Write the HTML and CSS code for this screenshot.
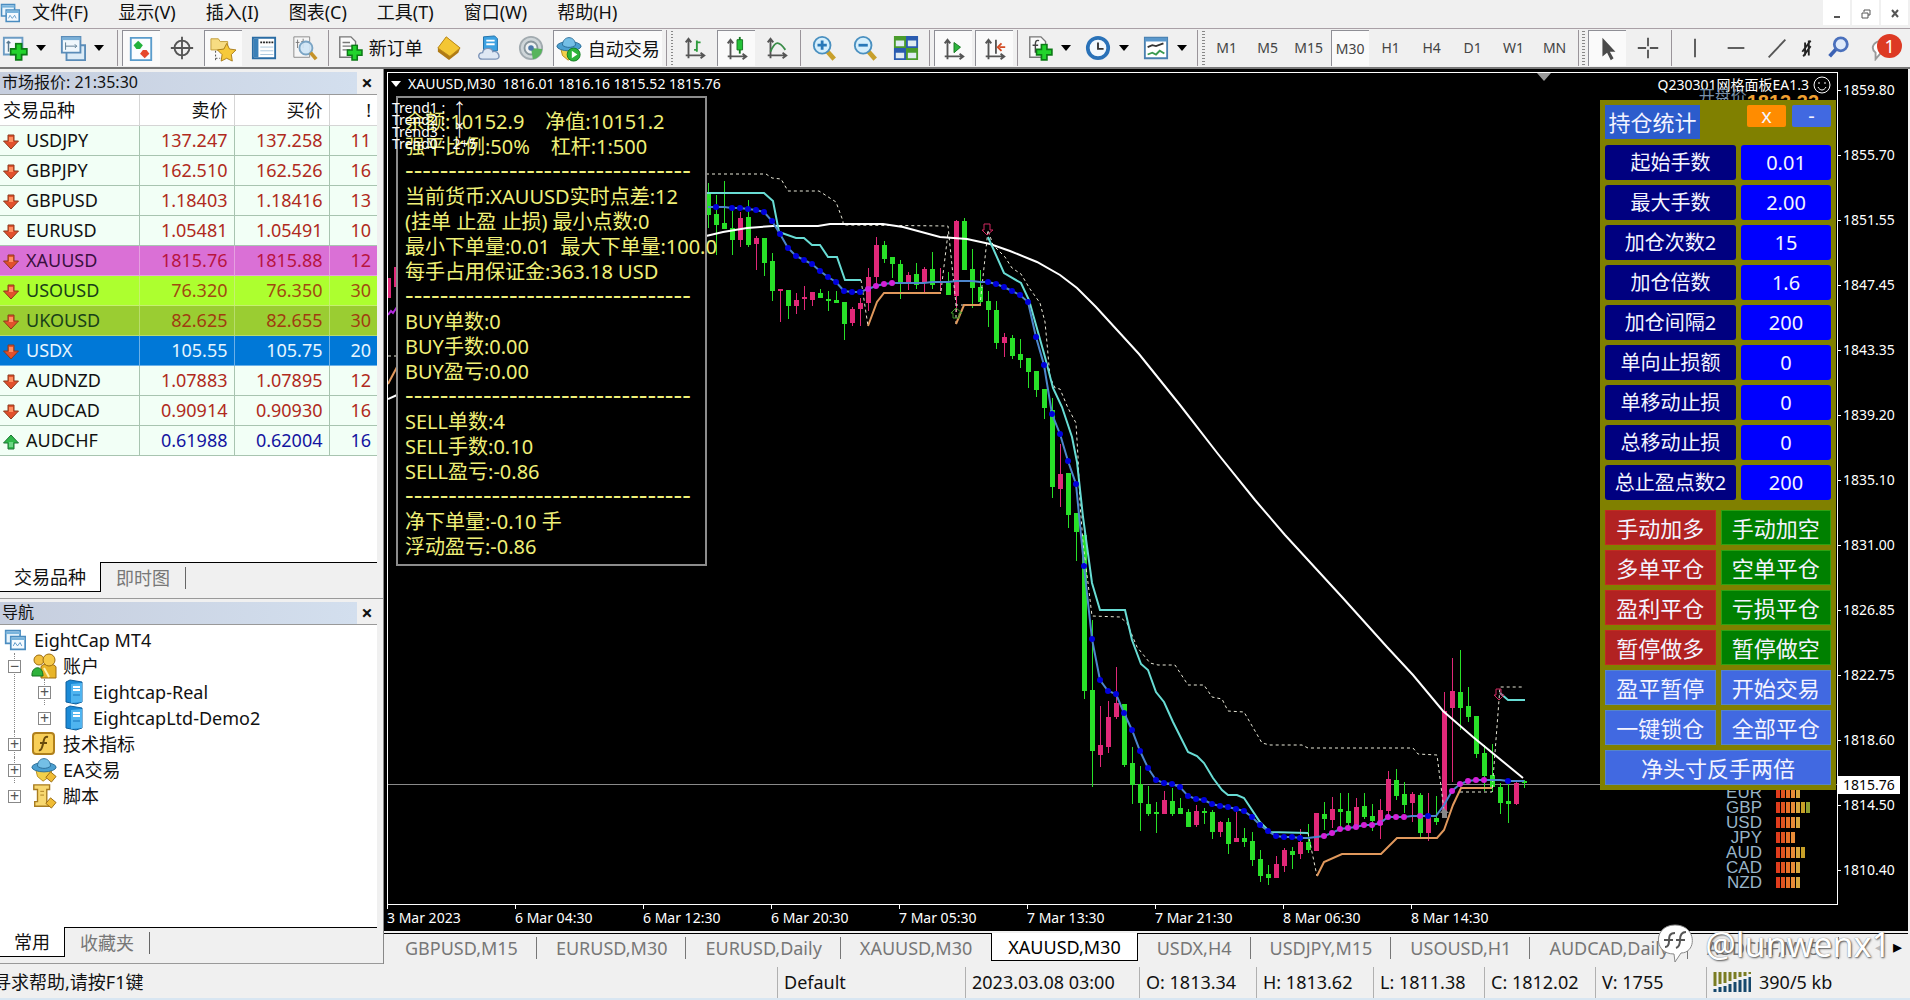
FILE: index.html
```html
<!DOCTYPE html>
<html lang="zh-CN">
<head>
  <meta charset="UTF-8">
  <meta name="viewport" content="width=device-width, initial-scale=1.0">
  <title>EightCap MT4 - XAUUSD,M30</title>
  <link rel="stylesheet" href="styles.css">
</head>
<body>

  <!-- shared icons -->
  <svg class="sprite" aria-hidden="true">
    <symbol id="i-down" viewBox="0 0 16 16"><path d="M5 1h6v6h4.500L8 15 .5 7H5z" fill="#e2502c" stroke="#8c3a1c"/><path d="M6 3h4v5H6z" fill="#ff9060"/></symbol>
    <symbol id="i-up" viewBox="0 0 16 16"><path d="M5 15h6V9h4.500L8 1 .5 9H5z" fill="#2fb84a" stroke="#1b7433"/><path d="M6 8h4v5H6z" fill="#6cd884"/></symbol>
    <symbol id="i-plus" viewBox="0 0 16 16"><path d="M5.500 1h5v4.500H15v5h-4.500V15h-5v-4.500H1v-5h4.500z" fill="#22d32c" stroke="#0c7a16" stroke-width="1.500"/></symbol>
    <symbol id="i-server" viewBox="0 0 26 26"><path d="M5 3l4-2 12 2v20l-6 2L5 23z" fill="#1b8ad6" stroke="#0f5f9c"/><path d="M10 5l11-1v19l-11 1z" fill="#4fb4f0"/><path d="M12 8h7M12 11h7" stroke="#fff" stroke-width="2"/><path d="M12 16h7" stroke="#1a77bd"/></symbol>
    <symbol id="i-hat" viewBox="0 0 28 28"><path d="M5 13h18l-3 8-7 5-6-5z" fill="#f2d04a" stroke="#b48a1c"/><ellipse cx="14" cy="11" rx="13" ry="5" fill="#4b9fd0" stroke="#2a6c96"/><path d="M7 10c0-11 14-11 14 0-4 3-10 3-14 0z" fill="#74bfe6" stroke="#2a6c96"/></symbol>
    <symbol id="i-windows" viewBox="0 0 26 26"><path d="M2 2h17v15H2z" fill="#e8f4fc" stroke="#4a8cc0" stroke-width="2"/><path d="M2 3h17v3H2z" fill="#7ab4dc"/><path d="M8 9h17v15H8z" fill="#f4faff" stroke="#4a8cc0" stroke-width="2"/><path d="M8 10h17v3H8z" fill="#7ab4dc"/><path d="M11 20l2-4 3 4 3-4 2 4" fill="none" stroke="#4a8cc0"/></symbol>
    <symbol id="i-axes" viewBox="0 0 28 28"><path d="M7 4v21M4 22h20M4 8l3-4 3 4M20 19l4 3-4 3" fill="none" stroke="#555" stroke-width="2"/></symbol>
  </svg>

  <header class="menubar">
    <svg class="app-icon"><use href="#i-windows"/></svg>
    <nav>
      <button>文件(F)</button>
      <button>显示(V)</button>
      <button>插入(I)</button>
      <button>图表(C)</button>
      <button>工具(T)</button>
      <button>窗口(W)</button>
      <button>帮助(H)</button>
    </nav>
    <div class="window-buttons">
      <button aria-label="最小化"><svg viewBox="0 0 12 12"><path d="M3 9h6" stroke="#555" stroke-width="2"/></svg></button>
      <button aria-label="还原"><svg viewBox="0 0 12 12"><path d="M4 4V2h6v5H8M2 5h6v5H2z" fill="none" stroke="#555"/></svg></button>
      <button aria-label="关闭"><svg viewBox="0 0 12 12"><path d="M3 2l6 7M9 2L3 9" stroke="#555" stroke-width="2"/></svg></button>
    </div>
  </header>

  <div class="toolbar">
    <button class="tool drop first" aria-label="新图表"><svg viewBox="0 0 28 28"><path d="M2 3h20v18H2z" fill="#f4f9fd" stroke="#6c9cc4" stroke-width="2"/><path d="M7 7v11M5 9l2-2 2 2" fill="none" stroke="#58788f" stroke-width="1.500"/><use href="#i-plus" x="8" y="8" width="20" height="20"/></svg></button>
    <button class="tool drop first" aria-label="模板配置"><svg viewBox="0 0 28 28"><path d="M7 11h20v16H7z" fill="#dcebf6" stroke="#5a8cb8" stroke-width="2"/><path d="M2 2h20v17H2z" fill="#f0f7fc" stroke="#5a8cb8" stroke-width="2"/><path d="M2 4h20" stroke="#7ab0d8" stroke-width="3"/><path d="M6 8v8M6 12h12M16 10l2 2-2 2" fill="none" stroke="#58788f"/></svg></button>
    <i class="sep"></i>
    <button class="tool on" aria-label="市场报价"><svg viewBox="0 0 28 28"><path d="M3 2h22v24H3z" fill="#fbfdff" stroke="#5a9ccc" stroke-width="2"/><path d="M11 5l5 5-3 4H9l-3-4z" fill="#23b23c"/><path d="M18 24l-5-5 3-4h4l3 4z" fill="#e6482c"/></svg></button>
    <button class="tool" aria-label="数据定位"><svg viewBox="0 0 28 28"><circle cx="14" cy="14" r="8" fill="none" stroke="#555" stroke-width="2"/><path d="M14 2v24M2 14h24" stroke="#555" stroke-width="2"/></svg></button>
    <button class="tool on" aria-label="导航"><svg viewBox="0 0 28 28"><path d="M1 3h8l2 3h8v9H1z" fill="#f7dc82" stroke="#c09a38"/><path d="M6 16v10M6 24h5" stroke="#444" stroke-dasharray="2 2"/><path d="M18 8l3 6 7 1-5 5 1 7-6-3-6 3 1-7-5-5 7-1z" fill="#f6c93a" stroke="#a87a18"/></svg></button>
    <button class="tool" aria-label="终端"><svg viewBox="0 0 28 28"><path d="M2 3h24v22H2z" fill="#fff" stroke="#2a6ca4" stroke-width="2"/><path d="M3 4h5v20H3z" fill="#3a80b8"/><path d="M10 8h14" stroke="#222" stroke-width="2" stroke-dasharray="2 1"/><path d="M10 13h14M10 17h14M10 21h14" stroke="#a8c6dc"/></svg></button>
    <button class="tool" aria-label="策略测试"><svg viewBox="0 0 28 28"><path d="M2 2h17v22H2z" fill="#f6f6f6" stroke="#888"/><path d="M6 5v9M4 8h4M12 4v10M10 7h5" stroke="#777"/><circle cx="15" cy="14" r="7" fill="#cfe6f6" fill-opacity=".9" stroke="#7aa4c4" stroke-width="2"/><path d="M20 19l6 7" stroke="#c49228" stroke-width="4"/></svg></button>
    <i class="sep"></i>
    <button class="tool wide"><svg viewBox="0 0 28 28"><path d="M3 2h12l5 5v17H3z" fill="#fafafa" stroke="#777" stroke-width="1.500"/><path d="M6 8h8M6 12h11M6 16h8" stroke="#777" stroke-width="1.500"/><use href="#i-plus" x="10" y="10" width="18" height="18"/></svg>新订单</button>
    <button class="tool" aria-label="MetaEditor"><svg viewBox="0 0 28 28"><path d="M11 2l15 12-2 5-10 8L2 18v-4z" fill="#b07a14"/><path d="M11 2l15 12-11 9L2 14z" fill="#f4c634" stroke="#b88618"/></svg></button>
    <button class="tool" aria-label="VPS"><svg viewBox="0 0 28 28"><path d="M7 2l12-1 3 3v13H7z" fill="#3da2e2" stroke="#1c6ea8"/><path d="M10 6h9M10 10h9" stroke="#fff" stroke-width="2"/><path d="M6 26c-6 0-5-7 0-7 1-6 10-6 11-1 6-2 10 8 3 8z" fill="#dfe8f4" stroke="#7c94b8" stroke-width="1.500"/></svg></button>
    <button class="tool" aria-label="信号"><svg viewBox="0 0 28 28"><circle cx="14" cy="14" r="12" fill="#cfd6d9" stroke="#a2abb0" stroke-width="2"/><circle cx="14" cy="14" r="7" fill="#eef1f2" stroke="#8a979e" stroke-width="2"/><path d="M14 14l2 12c6-1 10-6 10-11z" fill="#58b45c"/><circle cx="14" cy="14" r="3" fill="#4a78a8"/></svg></button>
    <button class="tool wide auto on"><svg viewBox="0 0 28 28"><use href="#i-hat"/><circle cx="19" cy="20" r="7" fill="#2cb43a" stroke="#147a22"/><path d="M17 16v8l6-4z" fill="#fff"/></svg>自动交易</button>
    <i class="sep"></i><i class="grip"></i>
    <button class="tool" aria-label="柱状图"><svg viewBox="0 0 28 28"><use href="#i-axes"/><path d="M16 6v12M13 16h3M16 8h4" stroke="#2c9a3c" stroke-width="2"/></svg></button>
    <button class="tool on" aria-label="阴阳烛"><svg viewBox="0 0 28 28"><use href="#i-axes"/><path d="M17 1v18" stroke="#14761f" stroke-width="2"/><path d="M14 4h6v11h-6z" fill="#24c238" stroke="#14761f"/></svg></button>
    <button class="tool" aria-label="折线图"><svg viewBox="0 0 28 28"><use href="#i-axes"/><path d="M7 18c5-12 9-12 16-2" fill="none" stroke="#3a8c48" stroke-width="2"/></svg></button>
    <i class="sep"></i>
    <button class="tool" aria-label="放大"><svg viewBox="0 0 28 28"><path d="M17 17l8 9" stroke="#c8a02c" stroke-width="5"/><circle cx="12" cy="11" r="9" fill="#d6effc" stroke="#4a90c0" stroke-width="2"/><path d="M12 6v10M7 11h10" stroke="#2878b8" stroke-width="3"/></svg></button>
    <button class="tool" aria-label="缩小"><svg viewBox="0 0 28 28"><path d="M17 17l8 9" stroke="#c8a02c" stroke-width="5"/><circle cx="12" cy="11" r="9" fill="#d6effc" stroke="#4a90c0" stroke-width="2"/><path d="M7 11h10" stroke="#2878b8" stroke-width="3"/></svg></button>
    <button class="tool" aria-label="平铺窗口"><svg viewBox="0 0 28 28"><path d="M1 1h13v13H1zM14 14h13v13H14z" fill="#4a9c2c"/><path d="M14 1h13v13H14zM1 14h13v13H1z" fill="#2a5cb0"/><path d="M3 6h9v6H3zM16 6h9v6h-9zM3 19h9v6H3zM16 19h9v6h-9z" fill="#e0ecf2"/></svg></button>
    <i class="sep"></i>
    <button class="tool on" aria-label="自动滚动"><svg viewBox="0 0 28 28"><use href="#i-axes"/><path d="M14 7l7 5-7 6z" fill="#2cb43c" stroke="#177522"/></svg></button>
    <button class="tool on" aria-label="图表平移"><svg viewBox="0 0 28 28"><use href="#i-axes"/><path d="M15 4v15" stroke="#555" stroke-width="2"/><path d="M25 12h-6M21 8l-4 4 4 4" fill="none" stroke="#d44c24" stroke-width="2"/></svg></button>
    <i class="sep"></i>
    <button class="tool drop" aria-label="技术指标"><svg viewBox="0 0 28 28"><path d="M3 2h12l5 5v17H3z" fill="#fafafa" stroke="#777" stroke-width="1.500"/><path d="M13 6c-3-1-4 1-4 4v9M6 11h6" fill="none" stroke="#444" stroke-width="1.500"/><use href="#i-plus" x="9" y="9" width="19" height="19"/></svg></button>
    <button class="tool drop" aria-label="时段"><svg viewBox="0 0 28 28"><circle cx="14" cy="14" r="11" fill="#f2f8fc" stroke="#2a72b8" stroke-width="4"/><path d="M14 8v7h6" fill="none" stroke="#333" stroke-width="2"/></svg></button>
    <button class="tool drop" aria-label="模板"><svg viewBox="0 0 28 28"><path d="M2 3h24v22H2z" fill="#fff" stroke="#4a80b0" stroke-width="2"/><path d="M2 5h24" stroke="#5a98cc" stroke-width="4"/><path d="M5 13l5-2 4 1 8-3" fill="none" stroke="#333" stroke-width="2"/><path d="M5 21l5-2 4 2 4-4 5 3" fill="none" stroke="#3a9a50" stroke-width="2"/></svg></button>
    <i class="sep"></i><i class="grip"></i>
    <button class="tool period">M1</button>
    <button class="tool period">M5</button>
    <button class="tool period">M15</button>
    <button class="tool period on">M30</button>
    <button class="tool period">H1</button>
    <button class="tool period">H4</button>
    <button class="tool period">D1</button>
    <button class="tool period">W1</button>
    <button class="tool period">MN</button>
    <i class="sep"></i><i class="grip"></i>
    <button class="tool on" aria-label="光标"><svg viewBox="0 0 28 28"><path d="M8 2v20l5-4 4 8 3-2-4-7h6z" fill="#4a4a4a"/></svg></button>
    <button class="tool" aria-label="十字线"><svg viewBox="0 0 28 28"><path d="M14 3v9M14 16v9M3 14h9M16 14h9" stroke="#555" stroke-width="2"/></svg></button>
    <i class="sep"></i>
    <button class="tool" aria-label="垂直线"><svg viewBox="0 0 28 28"><path d="M14 4v20" stroke="#555" stroke-width="2"/></svg></button>
    <button class="tool" aria-label="水平线"><svg viewBox="0 0 28 28"><path d="M5 14h18" stroke="#555" stroke-width="2"/></svg></button>
    <button class="tool" aria-label="趋势线"><svg viewBox="0 0 28 28"><path d="M5 24L23 5" stroke="#555" stroke-width="2"/></svg></button>
    <button class="tool cut" aria-label="等距通道"><svg viewBox="0 0 12 28"><path d="M2 18L11 6M3 23l8-11M5 8v14M9 6v16" stroke="#222" stroke-width="2"/></svg></button>
    <span class="spacer"></span>
    <button class="tool" aria-label="搜索"><svg viewBox="0 0 28 28"><path d="M13 14l-8 9" stroke="#3c62b4" stroke-width="4"/><circle cx="17" cy="10" r="7" fill="#dfeafa" stroke="#4a70bc" stroke-width="3"/></svg></button>
    <button class="tool chat" aria-label="消息"><svg viewBox="0 0 28 28"><path d="M6 24v-5c-7-6 0-14 8-12 10 2 9 13-3 13l-5 6z" fill="#fff" stroke="#999" stroke-width="2"/></svg><b>1</b></button>
  </div>

  <main>
    <aside>
      <section class="panel market">
        <h2><span>市场报价: 21:35:30</span><button aria-label="关闭">×</button></h2>
        <div class="panel-body">
          <table>
            <thead><tr><th>交易品种</th><th>卖价</th><th>买价</th><th>!</th></tr></thead>
            <tbody>
              <tr><td><svg><use href="#i-down"/></svg>USDJPY</td><td>137.247</td><td>137.258</td><td>11</td></tr>
              <tr><td><svg><use href="#i-down"/></svg>GBPJPY</td><td>162.510</td><td>162.526</td><td>16</td></tr>
              <tr><td><svg><use href="#i-down"/></svg>GBPUSD</td><td>1.18403</td><td>1.18416</td><td>13</td></tr>
              <tr><td><svg><use href="#i-down"/></svg>EURUSD</td><td>1.05481</td><td>1.05491</td><td>10</td></tr>
              <tr class="orchid"><td><svg><use href="#i-down"/></svg>XAUUSD</td><td>1815.76</td><td>1815.88</td><td>12</td></tr>
              <tr class="lime"><td><svg><use href="#i-down"/></svg>USOUSD</td><td>76.320</td><td>76.350</td><td>30</td></tr>
              <tr class="olive"><td><svg><use href="#i-down"/></svg>UKOUSD</td><td>82.625</td><td>82.655</td><td>30</td></tr>
              <tr class="selected"><td><svg><use href="#i-down"/></svg>USDX</td><td>105.55</td><td>105.75</td><td>20</td></tr>
              <tr><td><svg><use href="#i-down"/></svg>AUDNZD</td><td>1.07883</td><td>1.07895</td><td>12</td></tr>
              <tr><td><svg><use href="#i-down"/></svg>AUDCAD</td><td>0.90914</td><td>0.90930</td><td>16</td></tr>
              <tr class="rise"><td><svg><use href="#i-up"/></svg>AUDCHF</td><td>0.61988</td><td>0.62004</td><td>16</td></tr>
            </tbody>
          </table>
        </div>
        <div class="tabs"><button class="active">交易品种</button><button>即时图</button><i></i></div>
      </section>

      <section class="panel navigator">
        <h2><span>导航</span><button aria-label="关闭">×</button></h2>
        <div class="panel-body">
          <div class="node root"><svg><use href="#i-windows"/></svg>EightCap MT4</div>
          <ul class="tree">
            <li>
              <div class="node"><button aria-label="折叠">−</button><svg viewBox="0 0 26 26"><path d="M10 25V14c0-4 14-4 15 0v11z" fill="#e8b428" stroke="#9c6c10"/><circle cx="8" cy="7" r="5" fill="#f2c040" stroke="#9c6c10"/><circle cx="18" cy="7" r="6" fill="#f6ca48" stroke="#9c6c10"/><path d="M1 23c-1-10 11-12 11 0z" fill="#2fb23c" stroke="#15701f"/><path d="M13 15l5 9" stroke="#fff2b0" stroke-width="2"/></svg>账户</div>
              <ul>
                <li><div class="node"><button aria-label="展开">+</button><svg><use href="#i-server"/></svg>Eightcap-Real</div></li>
                <li><div class="node"><button aria-label="展开">+</button><svg><use href="#i-server"/></svg>EightcapLtd-Demo2</div></li>
              </ul>
            </li>
            <li><div class="node"><button aria-label="展开">+</button><svg viewBox="0 0 26 26"><rect x="2" y="2" width="21" height="21" rx="3" fill="#f8cf58" stroke="#b0801c" stroke-width="2"/><path d="M17 6c-4-1-4 3-5 7s-2 7-4 6M9 12h7" fill="none" stroke="#6a4c0c" stroke-width="2"/></svg>技术指标</div></li>
            <li><div class="node"><button aria-label="展开">+</button><svg viewBox="0 0 28 28"><use href="#i-hat"/><path d="M21 16l6 5-5 6-6-5z" fill="#f0bc34" stroke="#96690f"/></svg>EA交易</div></li>
            <li><div class="node"><button aria-label="展开">+</button><svg viewBox="0 0 28 28"><path d="M3 2h17v5h-3v14h4v4H4v-5h3V7H3z" fill="#f8d870" stroke="#a87c20" stroke-width="1.500"/><path d="M10 9h4M10 13h4" stroke="#a87c20"/><path d="M21 16l6 5-5 6-6-5z" fill="#f0bc34" stroke="#96690f"/></svg>脚本</div></li>
          </ul>
        </div>
        <div class="tabs"><button class="active">常用</button><button>收藏夹</button><i></i></div>
      </section>
    </aside>

    <div class="workspace">
      <div class="chart">
        <div class="plot">
          <svg id="candles" viewBox="388 73 1449 831" preserveAspectRatio="xMinYMin meet" role="img" aria-label="XAUUSD M30 K线图"></svg>
          <p class="chart-title"><i></i>XAUUSD,M30&nbsp; 1816.01 1816.16 1815.52 1815.76</p>

          <div class="account">
            <p>余额:10152.9    净值:10151.2</p>
            <p>强平比例:50%    杠杆:1:500</p>
            <p class="rule">---------------------------------</p>
            <p>当前货币:XAUUSD实时点差:12</p>
            <p>(挂单 止盈 止损) 最小点数:0</p>
            <p>最小下单量:0.01  最大下单量:100.0</p>
            <p>每手占用保证金:363.18 USD</p>
            <p class="rule">---------------------------------</p>
            <p>BUY单数:0</p>
            <p>BUY手数:0.00</p>
            <p>BUY盈亏:0.00</p>
            <p class="rule">---------------------------------</p>
            <p>SELL单数:4</p>
            <p>SELL手数:0.10</p>
            <p>SELL盈亏:-0.86</p>
            <p class="rule">---------------------------------</p>
            <p>净下单量:-0.10 手</p>
            <p>浮动盈亏:-0.86</p>
          </div>
          <ul class="trends">
            <li>Trend1 :  ↑</li>
            <li>Trend2 :  ↓</li>
            <li>Trend3 :  ↑</li>
            <li>Trend0 :  2+5</li>
          </ul>

          <div class="ea-name">Q230301网格面板EA1.3
            <svg viewBox="0 0 18 18"><circle cx="9" cy="9" r="8" fill="none" stroke="#fff"/><path d="M6 6v2M12 6v2M5 11c2 4 6 4 8 0" fill="none" stroke="#fff"/></svg>
          </div>
          <div class="open-price"><span>开盘价</span><b>1813.33</b></div>

          <form class="ea-panel">
            <div class="ea-head">
              <button type="button" class="caption">持仓统计</button>
              <button type="button" class="mini close">x</button>
              <button type="button" class="mini">-</button>
            </div>
            <div class="ea-fields">
              <label for="f1">起始手数</label><input id="f1" value="0.01">
              <label for="f2">最大手数</label><input id="f2" value="2.00">
              <label for="f3">加仓次数2</label><input id="f3" value="15">
              <label for="f4">加仓倍数</label><input id="f4" value="1.6">
              <label for="f5">加仓间隔2</label><input id="f5" value="200">
              <label for="f6">单向止损额</label><input id="f6" value="0">
              <label for="f7">单移动止损</label><input id="f7" value="0">
              <label for="f8">总移动止损</label><input id="f8" value="0">
              <label for="f9">总止盈点数2</label><input id="f9" value="200">
            </div>
            <div class="ea-actions">
              <button type="button" class="red">手动加多</button><button type="button" class="green">手动加空</button>
              <button type="button" class="red">多单平仓</button><button type="button" class="green">空单平仓</button>
              <button type="button" class="red">盈利平仓</button><button type="button" class="green">亏损平仓</button>
              <button type="button" class="red">暂停做多</button><button type="button" class="green">暂停做空</button>
              <button type="button">盈平暂停</button><button type="button">开始交易</button>
              <button type="button">一键锁仓</button><button type="button">全部平仓</button>
              <button type="button" class="full">净头寸反手两倍</button>
            </div>
          </form>

          <ul class="strength">
            <li>EUR<span><i></i><i></i><i></i><i></i><i></i></span></li>
            <li>GBP<span><i></i><i></i><i></i><i></i><i></i><i></i><i></i></span></li>
            <li>USD<span><i></i><i></i><i></i><i></i><i></i></span></li>
            <li>JPY<span><i></i><i></i><i></i><i></i></span></li>
            <li>AUD<span><i></i><i></i><i></i><i></i><i></i><i></i></span></li>
            <li>CAD<span><i></i><i></i><i></i><i></i><i></i></span></li>
            <li>NZD<span><i></i><i></i><i></i><i></i><i></i></span></li>
          </ul>
        </div>
        <div class="price-axis">
          <ul>
            <li>1859.80</li><li>1855.70</li><li>1851.55</li><li>1847.45</li><li>1843.35</li><li>1839.20</li><li>1835.10</li>
            <li>1831.00</li><li>1826.85</li><li>1822.75</li><li>1818.60</li><li>1814.50</li><li>1810.40</li>
          </ul>
          <span class="last-price">1815.76</span>
        </div>
        <ul class="time-axis">
          <li>3 Mar 2023</li><li>6 Mar 04:30</li><li>6 Mar 12:30</li><li>6 Mar 20:30</li><li>7 Mar 05:30</li>
          <li>7 Mar 13:30</li><li>7 Mar 21:30</li><li>8 Mar 06:30</li><li>8 Mar 14:30</li>
        </ul>
      </div>
      <div class="chart-tabs">
        <button>GBPUSD,M15</button><button>EURUSD,M30</button><button>EURUSD,Daily</button><button class="before">XAUUSD,M30</button><button class="active">XAUUSD,M30</button><button>USDX,H4</button><button>USDJPY,M15</button><button>USOUSD,H1</button><button>AUDCAD,Daily</button><button>AUDCHF,M15</button>
        <span class="scroll">◂</span><span class="scroll dark">▸</span>
      </div>
    </div>
  </main>

  <footer class="statusbar">
    <span class="help">寻求帮助,请按F1键</span>
    <span class="s-profile">Default</span>
    <span class="s-time">2023.03.08 03:00</span>
    <span class="s-price">O: 1813.34</span>
    <span class="s-price">H: 1813.62</span>
    <span class="s-low">L: 1811.38</span>
    <span class="s-low">C: 1812.02</span>
    <span class="s-low">V: 1755</span>
    <span class="s-net"><svg viewBox="0 0 38 20"><path d="M2 0v14M7 0v12M12 0v11M17 0v9M22 0v7M27 0v5M32 0v4M37 0v2" stroke="#7a7c22" stroke-width="3"/><path d="M2 17v3M7 15v5M12 14v6M17 12v8M22 10v10M27 8v12M32 7v13M37 5v15" stroke="#16486c" stroke-width="3"/></svg>390/5 kb</span>
  </footer>

  <div class="watermark">
    <svg viewBox="0 0 36 40"><path d="M18 1c22 0 22 28 6 28l-6 9-1-8C-4 30-4 1 18 1z" fill="#fff" stroke="#888"/><path d="M18 9c-6 0-6 4-6 8s-2 6-4 6M7 16h9M29 8c-5 0-6 4-6 8s-1 7-4 8M19 16h9" fill="none" stroke="#555" stroke-width="2"/></svg>
    <span>@lunwenx1</span>
  </div>

<script>
// one row per bar: colour, high, body top, body bottom, low
const bars = `g183,192,215,228 g195,214,225,255 g181,223,229,229 g207,228,240,255 p212,218,240,247 g200,217,245,247
p236,238,244,270 g238,238,263,276 g253,261,291,301 p289,289,291,322 g290,290,306,319 p293,300,306,314
p286,297,299,310 p292,292,300,306 g289,293,298,298 g291,299,301,311 g291,300,303,303 g302,302,324,340
p307,309,323,326 p298,303,309,326 p268,277,303,311 p237,245,277,286 g241,245,259,263 g257,257,264,278
g260,264,282,299 p272,275,283,290 g263,274,285,289 p267,269,283,293 g252,269,285,289 p268,281,283,291
g272,283,295,295 p220,221,296,312 g218,221,270,270 g249,269,288,308 g270,287,302,303 g291,301,310,327
g301,310,343,349 p333,337,343,357 g335,338,356,359 g339,354,360,368 g358,358,372,388 g371,371,390,397
g389,389,408,419 g398,410,487,498 p444,474,489,507 g473,473,515,528 g513,513,532,561 g533,535,691,699
g620,690,751,787 p706,745,755,767 p701,717,747,753 p667,703,717,719 g704,704,765,767 g747,763,785,804
g766,784,803,831 g786,804,814,816 g802,812,814,833 p791,800,814,814 g788,801,814,816 g798,808,814,814
g809,812,827,827 p805,811,825,827 g808,811,813,824 g810,812,832,839 p821,822,832,837 g818,822,844,854
p812,838,842,842 g828,838,842,847 g832,841,860,866 g850,859,876,882 g865,874,878,885 p856,864,878,878
p848,850,866,872 g847,851,855,869 p829,842,854,859 g824,842,850,853 p813,813,851,851 g802,814,819,830
p797,809,820,828 g793,809,812,830 g793,811,823,830 p798,807,825,825 g793,806,817,819 g804,816,821,831
p799,810,825,839 p771,779,811,815 g769,780,796,800 g782,794,805,813 p792,794,803,822 g793,795,833,838
p793,816,833,841 g796,818,822,825 p692,711,817,818 p658,691,708,782 g650,692,708,730 g687,706,717,722
g716,716,754,758 g745,753,776,791 g744,775,787,792 g783,787,803,814 g784,801,804,823 p780,783,804,805
g780,781,783,788`.split(/\s+/);

// average line value at each bar
const average = [207,207,207,208,208,209,210,212,221,234,248,256,260,264,271,277,282,291,292,292,289,286,284,283,
  283,283,283,283,282,282,282,281,281,281,282,282,284,287,291,295,302,337,365,414,434,461,484,566,639,680,691,694,
  713,730,751,768,780,783,784,787,796,799,800,804,806,807,809,811,817,825,831,836,837,837,838,838,837,836,833,829,
  828,827,825,825,823,817,817,817,816,816,816,816,805,791,784,781,780,780,780,780,781,781,781];
// dot at each bar: b = falling, m = rising, - = none
const dots = '-b-bbbbbbbbbbbbbbbbbmmmm-----------bbbbbbbbbbbbbbbbbbbbbbbbbbbbbbbbbbbbbbbb--mmmmmmmmmmm-mb--mmmmm--b--b';

const chart = document.getElementById('candles');
let out = '';
const barX = (i) => 708 + i * 8;

function line(cls, points) {
  out += `<polyline class="${cls}" points="${points}"/>`;
}

// part of the bars left of the account box
out += '<path class="p" d="M388 278h3v20h-3zM394 267h5v20h-5z"/>';
line('violet', '388,315 391,311 393,313 397,307');
line('dash', '388,356 397,356');
line('orange', '388,384 397,367');
line('white', '388,399 397,395');

out += '<path class="last" d="M388 784.5H1837"/>';
bars.forEach((bar, i) => {
  const [high, top, bottom, low] = bar.slice(1).split(',').map(Number);
  const x = barX(i);
  out += `<path class="${bar[0]}" d="M${x} ${high}h1V${low}h-1zM${x - 2} ${top}h5V${bottom}h-5z"/>`;
});

line('dash', '706,174 766,174 772,178 781,179 788,191 819,191 836,202 843,221 843,225 948,226 956,305');
line('dash', '941,291 948,233');
line('dash', '861,280 868,326');
line('dash', '956,324 956,305 980,305 988,230 993,245 1005,257 1012,268 1021,274 1030,289 1040,303 1045,322 1047,343 1050,377 1055,388 1060,389 1068,408 1076,423 1078,457 1080,503 1083,543 1088,583 1092,616 1120,617 1127,623 1137,647 1150,663 1158,665 1175,665 1188,685 1204,685 1212,697 1222,699 1228,711 1244,712 1262,743 1270,745 1302,745 1308,748 1413,748 1418,754 1437,755 1444,810');
line('dash', '1308,833 1317,876');
line('dash', '1460,792 1492,792 1500,687 1523,687');
line('white', '706,236 723,232 747,228 773,226 818,226 830,224 883,224 903,227 940,237 967,239 990,244 1010,251 1037,262 1060,275 1077,288 1096,307 1139,354 1180,405 1218,454 1255,500 1285,535 1342,597 1387,647 1413,675 1443,711 1473,737 1523,778');
line('cyan', '706,193 764,193 773,201 779,232 796,238 804,238 812,245 820,245 828,257 837,257 845,280 861,280');
line('cyan', '988,237 1004,273 1021,283 1029,300 1045,357 1053,388 1062,407 1072,437 1077,462 1083,517 1092,583 1100,610 1125,610 1132,640 1141,664 1148,670 1156,692 1164,702 1173,722 1188,752 1197,756 1204,763 1213,778 1222,790 1228,795 1237,795 1244,798 1260,822 1270,832 1308,833');
line('cyan', '1500,693 1508,700 1525,700');
line('orange', '868,326 877,302 884,293 941,293');
line('orange', '956,324 964,305 981,305');
line('orange', '1317,876 1324,862 1342,854 1381,854 1397,838 1437,838 1444,830 1453,805 1461,788 1492,788');
line('steel', average.map((y, i) => `${barX(i)},${y}`).join(' '));
average.forEach((y, i) => {
  if (dots[i] !== '-') out += `<circle class="dot-${dots[i]}" cx="${barX(i)}" cy="${y}" r="3"/>`;
});

// entry arrows and the shift marker
out += '<path class="mark-p" d="M984 224h6v6h3l-6 5-5-5h2zM1496 689h5v6h3l-5 5-5-5h2z"/>';
out += '<path class="mark-g" d="M953 318h6v-5h3l-6-5-5 5h2z"/><path class="mark-grey" d="M1442 818h5v-5h2l-5-5-4 5h2z"/>';
out += '<path fill="#999" d="M1537 73h14l-7 8z"/>';
chart.innerHTML = out;
</script>
</body>
</html>
```
FILE: styles.css
```css
* {
  box-sizing: border-box;
}

body {
  margin: 0;
  height: 100vh;
  display: flex;
  flex-direction: column;
  overflow: hidden;
  background: #f0f0f0;
  color: #111;
  font-family: "Noto Sans", "Noto Sans CJK SC", sans-serif;
  font-size: 18px;
  line-height: 24px;
}

button,
input {
  font: inherit;
  color: inherit;
  border: 0;
  padding: 0;
  background: none;
}

ul {
  list-style: none;
  margin: 0;
  padding: 0;
}

p {
  margin: 0;
}

.sprite {
  display: none;
}

/* menu */
.menubar {
  display: flex;
  align-items: flex-start;
  height: 28px;
  flex: none;
}

.app-icon {
  width: 20px;
  height: 26px;
}

.menubar nav {
  display: flex;
  gap: 30px;
  flex: 1;
  padding-left: 12px;
}

.window-buttons {
  display: flex;
  gap: 2px;
  margin-right: 2px;
}

.window-buttons button {
  width: 27px;
  height: 25px;
  background: #fff;
}

.window-buttons svg {
  width: 12px;
  height: 12px;
}

/* toolbar */
.toolbar {
  display: flex;
  align-items: center;
  gap: 3px;
  height: 41px;
  flex: none;
  border-top: 1px solid #a9a0a6;
  border-bottom: 2px solid #777;
}

.tool {
  display: flex;
  align-items: center;
  justify-content: center;
  flex: none;
  width: 38px;
  height: 36px;
}

.tool svg {
  width: 26px;
  height: 26px;
  flex: none;
}

.tool.on {
  background: #fafafa;
  border-top: 1px solid #8f8f96;
  border-left: 1px solid #8f8f96;
}

.tool.wide {
  width: auto;
  gap: 6px;
  padding: 0 4px;
}

.tool.auto {
  padding: 0 2px;
}

.tool.drop {
  width: 55px;
  justify-content: flex-start;
  gap: 8px;
  padding-left: 5px;
}

.tool.drop.first {
  padding-left: 2px;
}

.tool.drop::after {
  content: "";
  border: 5px solid transparent;
  border-top: 6px solid #000;
  border-bottom: 0;
}

.tool.period {
  color: #444;
  font-size: 14px;
}

.tool.cut {
  width: 14px;
}

.tool.cut svg {
  width: 12px;
}

.tool.chat {
  position: relative;
}

.tool.chat b {
  position: absolute;
  top: 4px;
  left: 13px;
  width: 25px;
  border-radius: 50%;
  background: #dd3a24;
  color: #fff;
  font-weight: normal;
}

.spacer {
  flex: 1;
}

.toolbar .spacer + .tool + .tool {
  margin: 0 8px 0 4px;
}

.sep {
  width: 1px;
  height: 36px;
  margin: 0 1px;
  background: #9a949a;
}

.grip {
  width: 3px;
  height: 34px;
  background: repeating-linear-gradient(#888 0 1px, #f0f0f0 1px 3px);
}

main {
  display: flex;
  flex: 1;
  min-height: 0;
}

/* left side */
aside {
  display: grid;
  grid-template-rows: 530fr 365fr;
  width: 384px;
  flex: none;
  border-right: 1px solid #888;
}

.panel {
  display: flex;
  flex-direction: column;
  min-height: 0;
  padding-right: 6px;
  border-bottom: 1px solid #999;
}

.panel h2 {
  display: flex;
  align-items: center;
  height: 26px;
  margin: 0;
  padding-top: 2px;
  border-bottom: 1px solid #999;
  font-size: 16px;
  font-weight: normal;
}

.panel h2 span {
  flex: 1;
  height: 22px;
  padding-left: 2px;
  line-height: 20px;
  background: linear-gradient(90deg, #c6cede, #d3dfee);
}

.panel h2 button {
  width: 20px;
  line-height: 20px;
  font-size: 20px;
  font-weight: bold;
}

.panel-body {
  flex: 1;
  min-height: 0;
  background: #fff;
}

table {
  width: 100%;
  table-layout: fixed;
  border-collapse: collapse;
}

th,
td {
  height: 30px;
  padding: 0 6px 0 0;
  border-right: 1px solid #a8c4b0;
  border-bottom: 1px solid #a8c4b0;
  text-align: right;
  font-weight: normal;
}

th {
  border-color: #d5d5d5;
}

th:first-child,
td:first-child {
  width: 139px;
  padding-left: 3px;
  text-align: left;
}

th:nth-child(2),
th:nth-child(3) {
  width: 95px;
}

th:last-child,
td:last-child {
  border-right: 0;
}

td {
  color: #b02a20;
  background: #f2fff6;
}

td:first-child {
  color: #111;
}

td svg {
  width: 16px;
  height: 16px;
  margin-right: 7px;
  vertical-align: -3px;
}

.orchid td { background: #da70d6; color: #b81440; border-color: #e6a0e0; }
.lime td { background: #adff2f; color: #a04a10; border-color: #c6f070; }
.olive td { background: #9acd32; color: #a03c10; border-color: #b8dc6c; }
.orchid td:first-child { color: #3a1040; }
.lime td:first-child,
.olive td:first-child { color: #184018; }
.selected td,
.selected td:first-child { background: #0078d7; color: #e6f6ff; border-color: #6ab0e8; }
.rise td { color: #1414a0; }
.rise td:first-child { color: #111; }

.tabs {
  display: flex;
  align-items: flex-start;
  flex: none;
  height: 36px;
}

.tabs button {
  height: 30px;
  padding: 0 15px;
  border-top: 1px solid #000;
  color: #777;
}

.tabs button.active {
  background: #fff;
  color: #111;
  padding: 0 14px;
  border-top: 0;
  border-right: 1px solid #000;
  border-bottom: 1px solid #000;
}

.tabs i {
  flex: 1;
  height: 27px;
  border-top: 1px solid #000;
  background: linear-gradient(#666, #666) 0 4px / 1px 22px no-repeat;
}

.node {
  display: flex;
  align-items: center;
  height: 26px;
  white-space: nowrap;
}

.node svg {
  width: 26px;
  height: 26px;
  margin-right: 6px;
}

.node.root {
  padding: 2px 0 0 4px;
  height: 28px;
}

.node.root svg {
  width: 22px;
  height: 22px;
  margin-right: 8px;
}

.tree li {
  margin-left: 14px;
  border-left: 1px dotted #888;
}

.tree li:last-child {
  border-color: transparent;
}

.tree li li {
  margin-left: 29px;
}

.tree .node {
  margin-left: -7px;
}

.node button {
  width: 13px;
  height: 13px;
  border: 1px solid #888;
  background: #fff;
  color: #555;
  font-size: 16px;
  line-height: 11px;
}

.tree .node button + svg {
  margin-left: 10px;
}

/* chart window */
.workspace {
  display: flex;
  flex-direction: column;
  flex: 1;
  min-width: 0;
  margin-right: 2px;
}

.chart {
  display: grid;
  grid-template-columns: minmax(0, 1fr) 70px;
  grid-template-rows: minmax(0, 1fr) 26px;
  flex: 1;
  min-height: 0;
  padding: 3px 0 0 3px;
  background: #000;
  color: #fff;
  font-size: 14px;
  line-height: 18px;
}

.plot {
  position: relative;
  border: 1px solid #fff;
}

#candles {
  display: block;
  width: 100%;
  height: 100%;
}

#candles polyline {
  fill: none;
}

.g { fill: #28e028; }
.p { fill: #e02878; }
.last { stroke: #8a8a8a; }
.white { stroke: #fff; stroke-width: 2; }
.cyan { stroke: #68dcd4; stroke-width: 2; }
.orange { stroke: #e0985c; stroke-width: 2; }
.violet { stroke: #b428e0; stroke-width: 2; }
.steel { stroke: #4c86cc; stroke-width: 2; }
.dash { stroke: #e8e8d8; stroke-dasharray: 3 3; }
.dot-b { fill: #0000dc; }
.dot-m { fill: #d420d8; }
.mark-p { fill: none; stroke: #d02860; }
.mark-g { fill: none; stroke: #3c9a28; }
.mark-grey { fill: #888; }

/* items laid over the candles */
.chart-title,
.account,
.trends,
.ea-name,
.open-price,
.ea-panel,
.strength {
  position: absolute;
}

.chart-title {
  top: 2px;
  left: 3px;
  display: flex;
  align-items: center;
  gap: 7px;
  white-space: nowrap;
}

.chart-title i {
  border: 5px solid transparent;
  border-top: 6px solid #fff;
  border-bottom: 0;
}

.account {
  top: 23px;
  left: 8px;
  width: 311px;
  height: 470px;
  padding: 11px 0 0 7px;
  border: 2px solid #8c8c8c;
  background: #000;
  color: #f0f078;
  font-size: 20px;
  line-height: 25px;
}

.account p {
  height: 25px;
  white-space: pre;
}

.account .rule {
  font-family: "DejaVu Sans", sans-serif;
  font-size: 24px;
}

.trends {
  top: 29px;
  left: 4px;
  line-height: 12px;
}

.trends li {
  height: 12px;
  white-space: pre;
}

.ea-name {
  top: 3px;
  right: 6px;
  display: flex;
  gap: 4px;
  align-items: center;
}

.ea-name svg {
  width: 18px;
  height: 18px;
}

.open-price {
  top: 14px;
  right: 18px;
  display: flex;
  color: #7890a8;
  font-size: 16px;
}

.open-price b {
  color: #f0a030;
  font-family: "Liberation Sans", sans-serif;
  font-size: 20px;
  line-height: 30px;
}

.ea-panel {
  top: 27px;
  right: 1px;
  z-index: 1;
  width: 236px;
  padding: 5px;
  background: #808000;
  color: #f4f4ff;
  font-size: 20px;
  text-align: center;
}

.ea-head {
  display: flex;
  align-items: flex-start;
  gap: 6px;
  height: 40px;
}

.ea-head .caption {
  width: 95px;
  height: 34px;
  margin-right: auto;
  background: #2c5ccc;
  font-size: 22px;
  line-height: 34px;
}

.mini {
  width: 39px;
  height: 22px;
  border-radius: 2px;
  background: #4169e1;
}

.mini.close {
  background: #ff8c00;
}

.ea-fields {
  display: grid;
  grid-template-columns: 131fr 90fr;
  grid-auto-rows: 35px;
  gap: 5px;
}

.ea-fields label,
.ea-fields input {
  min-width: 0;
  width: 100%;
  border-radius: 3px;
  background: #000080;
  line-height: 35px;
  text-align: center;
}

.ea-fields input {
  background: #0000ff;
}

.ea-actions {
  display: grid;
  grid-template-columns: 1fr 1fr;
  grid-auto-rows: 35px;
  gap: 5px;
  margin-top: 10px;
  font-size: 22px;
}

.ea-actions button {
  border: 1px solid #5684c8;
  background: #4169e1;
}

.ea-actions .red { background: #b22222; border-color: #c02c20; }
.ea-actions .green { background: #008000; border-color: #30a010; }

.ea-actions .full {
  grid-column: 1 / 3;
}

.strength {
  right: 25px;
  bottom: 14px;
  color: #98b4c8;
  font-family: "Liberation Sans", sans-serif;
  font-size: 17px;
  line-height: 15px;
}

.strength li {
  display: flex;
  justify-content: flex-end;
  gap: 14px;
  align-items: center;
}

.strength span {
  display: flex;
  gap: 1px;
  width: 36px;
}

.strength i {
  width: 4px;
  height: 11px;
  background: #e03c1c;
}

.strength i:nth-child(2) { background: #e05420; }
.strength i:nth-child(3) { background: #e87028; }
.strength i:nth-child(4) { background: #e88c38; }
.strength i:nth-child(5) { background: #d8a840; }
.strength i:nth-child(6) { background: #c8a028; }
.strength i:nth-child(7) { background: #90a030; }

.price-axis {
  position: relative;
}

.price-axis li {
  display: flex;
  gap: 2px;
  height: 65px;
  padding-top: 9px;
}

.price-axis li::before {
  content: "";
  width: 3px;
  height: 1px;
  margin-top: 9px;
  background: #fff;
}

.last-price {
  position: absolute;
  top: 704px;
  left: 0;
  width: 62px;
  padding-left: 5px;
  background: #fff;
  color: #000;
}

.time-axis {
  display: flex;
  grid-column: 1 / 3;
}

.time-axis li {
  flex: 0 0 128px;
}

.time-axis li::before {
  content: "";
  display: block;
  width: 1px;
  height: 4px;
  background: #fff;
}

.chart-tabs {
  display: flex;
  flex: none;
  height: 33px;
  padding: 2px 0 3px;
}

.chart-tabs::before {
  content: "";
  width: 2px;
  border-top: 1px solid #000;
}

.chart-tabs button {
  padding: 0 19px;
  border-top: 1px solid #000;
  color: #777;
  background: linear-gradient(#777, #777) right 3px / 1px 22px no-repeat;
}

.chart-tabs .before {
  background: none;
}

.chart-tabs .active {
  padding: 0 16px;
  border: 1px solid #000;
  border-top: 0;
  background: #fff;
  color: #000;
}

.scroll {
  flex: 1;
  border-top: 1px solid #000;
  color: #bbb;
  text-align: right;
}

.scroll.dark {
  flex: 0 0 24px;
  padding-right: 6px;
  color: #000;
}

/* status */
.statusbar {
  display: flex;
  height: 36px;
  flex: none;
  padding-top: 3px;
  border-bottom: 2px solid #d8e6f2;
  white-space: nowrap;
}

.statusbar span {
  padding: 3px 0 0 6px;
  border-left: 1px solid #b0b0b0;
}

.statusbar .help {
  flex: 1;
  margin-left: -13px;
  border: 0;
}

.statusbar .s-profile { width: 188px; }
.statusbar .s-time { width: 174px; }
.statusbar .s-price { width: 117px; }
.statusbar .s-low { width: 111px; }
.statusbar .s-net { width: 204px; }

.statusbar svg {
  width: 38px;
  height: 20px;
  margin-right: 8px;
  vertical-align: -3px;
}

.watermark {
  position: absolute;
  right: 19px;
  bottom: 32px;
  display: flex;
  align-items: center;
  gap: 12px;
  color: #fff;
  font-size: 34px;
  line-height: 48px;
  text-shadow: 1px 1px 2px #555, 0 0 1px #777;
}

.watermark svg {
  width: 36px;
  height: 40px;
}
```
